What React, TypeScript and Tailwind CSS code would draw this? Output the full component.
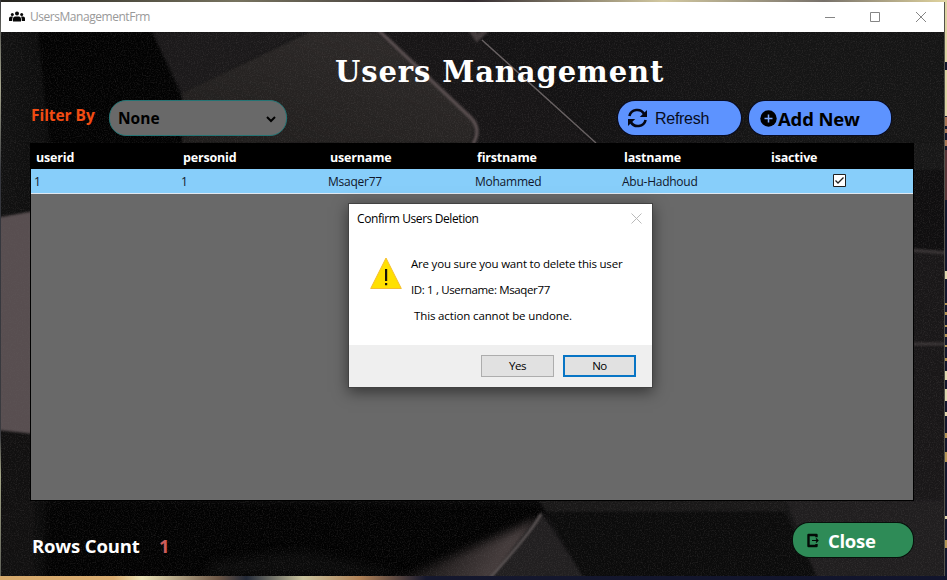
import React from "react";

const columns = ["userid", "personid", "username", "firstname", "lastname", "isactive"];
const user = ["1", "1", "Msaqer77", "Mohammed", "Abu-Hadhoud"];

function Desktop() {
  return (
    <svg className="absolute inset-0" width="947" height="580" viewBox="0 0 947 580">
      <defs>
        <linearGradient id="top">
          <stop offset="0" stopColor="#25241f" />
          <stop offset=".25" stopColor="#77735f" />
          <stop offset=".5" stopColor="#332c30" />
          <stop offset=".7" stopColor="#d2c8a0" />
          <stop offset=".87" stopColor="#77716a" />
          <stop offset="1" stopColor="#e1d49e" />
        </linearGradient>
        <linearGradient id="bottom">
          <stop offset="0" stopColor="#d7aa6d" />
          <stop offset=".12" stopColor="#dcae73" />
          <stop offset=".15" stopColor="#eee5ba" />
          <stop offset=".23" stopColor="#6e5847" />
          <stop offset=".26" stopColor="#232a38" />
          <stop offset=".32" stopColor="#cbc49f" />
          <stop offset=".38" stopColor="#b28358" />
          <stop offset=".45" stopColor="#15182e" />
          <stop offset="1" stopColor="#11142c" />
        </linearGradient>
        <linearGradient id="left" x2="0" y2="1">
          <stop offset="0" stopColor="#3b3c40" />
          <stop offset=".15" stopColor="#a7a78f" />
          <stop offset=".3" stopColor="#34363d" />
          <stop offset=".75" stopColor="#3a3a3e" />
          <stop offset=".82" stopColor="#a5a788" />
          <stop offset="1" stopColor="#5c5d56" />
        </linearGradient>
      </defs>
      <path fill="#11152b" d="M0 0h947v580H0z" />
      <path fill="url(#top)" d="M0 0h947v2H0z" />
      <path fill="url(#left)" d="M0 0h1v580H0z" />
      <path fill="url(#bottom)" d="M0 576h947v4H0z" />
      <path fill="#ded3a3" d="M944 0h3v62h-3zM944 70h3v46h-3z" />
      <path fill="#a87656" d="M944 117h3v9h-3zM944 129h3v4h-3zM944 140h3v6h-3z" />
      <path fill="#563437" d="M944 150h3v50h-3z" />
      <path fill="#e0d7af" d="M944 271h3v8h-3zM944 371h3v9h-3zM944 389h3v12h-3zM944 412h3v4h-3zM944 516h3v3h-3z" />
      <path fill="#b39556" d="M944 303h3v2h-3zM944 312h3v3h-3zM944 325h3v2h-3zM944 334h3v3h-3zM944 345h3v2h-3zM944 358h3v3h-3zM944 433h3v5h-3zM944 452h3v10h-3zM944 540h3v8h-3z" />
      <path fill="#55534b" d="M944 2h1v574h-1z" />
    </svg>
  );
}

function Wallpaper() {
  return (
    <svg className="absolute inset-0" width="943" height="544" viewBox="1 32 943 544">
      <defs>
        <linearGradient id="base">
          <stop offset="0" stopColor="#121212" />
          <stop offset=".09" stopColor="#070707" />
          <stop offset=".3" stopColor="#151415" />
          <stop offset=".6" stopColor="#131213" />
          <stop offset="1" stopColor="#171717" />
        </linearGradient>
        <linearGradient id="slab" x1="0" y1="1" x2="1" y2="0">
          <stop offset="0" stopColor="#1f1d1c" />
          <stop offset="1" stopColor="#302c2b" />
        </linearGradient>
        <linearGradient id="glow" x1="0" y1="0" x2="1" y2=".3">
          <stop offset=".2" stopColor="#060606" />
          <stop offset="1" stopColor="#554a4a" />
        </linearGradient>
        <filter id="soft" colorInterpolationFilters="sRGB"><feGaussianBlur stdDeviation="1.2" /></filter>
        <filter id="wide" x="-20%" y="-50%" width="140%" height="200%" colorInterpolationFilters="sRGB"><feGaussianBlur stdDeviation="5" /></filter>
        <filter id="grain" x="0" y="0" width="100%" height="100%" colorInterpolationFilters="sRGB">
          <feTurbulence type="fractalNoise" baseFrequency=".85" numOctaves="2" seed="4" />
          <feColorMatrix values="0 0 0 0 .4  0 0 0 0 .38  0 0 0 0 .38  1.5 0 0 0 -.67" />
        </filter>
      </defs>
      <path fill="url(#base)" d="M1 32h943v544H1z" />
      <g filter="url(#soft)">
        <path fill="#020202" d="M38 32H152L182 100V143H50z" />
        <path fill="#1b191a" d="M152 32H305L182 93z" />
        <path fill="url(#slab)" d="M182 93L310 32H376L476 122L471 143H182z" />
        <path fill="#171516" d="M376 32H472L593 143H471L478 124z" />
        <path fill="none" stroke="#5a4f50" strokeWidth="3.5" d="M377 29L470 117Q482 128 473 144" />
        <path fill="none" stroke="#413a3b" strokeWidth="6" d="M471 29L477 38L486 30" />
        <path fill="#151515" d="M768 32H944V143H740z" />
      </g>
      <path fill="none" stroke="#696263" strokeWidth="1.4" d="M482 40L596 143" />
      <g filter="url(#soft)">
        <path fill="#584e50" d="M-4 218L34 211V434L-4 430z" />
        <path fill="#111010" d="M-4 431L34 435V580H-4z" />
        <path fill="#191718" d="M910 195H948V580H910z" />
        <path fill="#0f0e0f" d="M910 170H948V252L910 249z" />
        <path fill="none" stroke="#3b3637" strokeWidth="3" d="M910 250L948 253M910 344H948" />
      </g>
      <path fill="#020202" filter="url(#wide)" d="M45 500H545V582H45z" />
      <path fill="#0b0b0b" filter="url(#wide)" d="M211 562L300 550L410 576H205z" />
      <path fill="url(#glow)" filter="url(#wide)" d="M540 518L390 584H493z" />
      <g filter="url(#soft)">
        <path fill="#211f20" d="M541 512L491 578H584z" />
        <path fill="#0b0b0b" d="M546 512H785L817 578H584z" />
        <path fill="#191818" d="M538 500H786V510L547 512z" />
        <path fill="#201e1f" d="M786 500H944V578H817z" />
      </g>
      <path fill="none" stroke="#6b6363" strokeWidth="1.8" filter="url(#soft)" d="M541 514Q533 530 490 578" />
      <path filter="url(#grain)" opacity=".42" d="M1 32h943v544H1z" />
    </svg>
  );
}

function TitleBar() {
  return (
    <header className="flex h-[30px] shrink-0 items-center bg-white pl-2">
      <svg width="16" height="12" viewBox="0 0 16 12" fill="#080808">
        <circle cx="8" cy="2.6" r="2" />
        <circle cx="3.3" cy="3.4" r="1.5" />
        <circle cx="12.7" cy="3.4" r="1.5" />
        <path d="M4 10.5V8Q4 5.4 6.3 5.4H9.7Q12 5.4 12 8V10.5zM0 10V7.3Q0 5.5 2 5.5H4Q3.2 6.5 3.2 10zM16 10V7.3Q16 5.5 14 5.5H12Q12.8 6.5 12.8 10z" />
      </svg>
      <span className="ml-[5px] text-[12px] tracking-[-0.46px] text-[#999]">UsersManagementFrm</span>
      <svg className="ml-auto mr-4" width="104" height="12" viewBox="0 0 104 12" fill="none" stroke="#858585">
        <path d="M1 6.5H11M46.5 1.5H55.5V10.5H46.5zM92 1L102 11M102 1L92 11" />
      </svg>
    </header>
  );
}

function Toolbar() {
  return (
    <div className="flex h-[43px] items-start pl-[30px]">
      <span className="mt-1 w-[78px] whitespace-nowrap text-[15.5px] font-bold leading-[22px] tracking-[-0.05px] text-[#f24c13]">Filter By</span>
      <div className="flex h-9 w-[178px] items-center justify-between rounded-[17px] border border-[#247474] bg-[#696969] pl-2 pr-[10px] text-[15.5px] font-bold text-black">
        <span className="mt-px">None</span>
        <svg className="mt-0.5" width="10" height="7" viewBox="0 0 10 7" fill="none" stroke="#000" strokeWidth="2"><path d="M1 1L5 5L9 1" /></svg>
      </div>
      <button className="ml-[331px] mt-px flex h-[34px] w-[123px] items-center rounded-full bg-[#5d93ff] pl-[9px] text-[16px] text-[#070b1c] ring-1 ring-[#080b23]">
        <svg width="21" height="20" viewBox="0 0 21 20" fill="none" stroke="#050714" strokeWidth="2.6">
          <path d="M2.4 8A8 7.8 0 0 1 17.2 6M18.6 12A8 7.8 0 0 1 3.8 14" />
          <path fill="#050714" stroke="none" d="M20 2V9H12.8zM1 18V11H8.2z" />
        </svg>
        <span className="ml-[7px] mt-px font-['Liberation_Sans',sans-serif] tracking-[-0.28px]">Refresh</span>
      </button>
      <button className="ml-2 mt-px flex h-[34px] w-[142px] items-center rounded-[16px] bg-[#5d93ff] pl-[11px] text-[18.5px] font-bold text-black ring-1 ring-[#080b23]">
        <svg width="17" height="17" viewBox="0 0 17 17"><circle cx="8.5" cy="8.5" r="8.2" /><path stroke="#7ba8ff" strokeWidth="1.5" d="M4.5 8.5h8M8.5 4.5v8" /></svg>
        <span className="ml-px mt-0.5 whitespace-nowrap tracking-[-0.15px]">Add New</span>
      </button>
    </div>
  );
}

function UsersTable() {
  return (
    <div className="ml-[29px] h-[358px] w-[884px] border border-black bg-[#696969]">
      <div className="flex h-[25px] items-center bg-black text-[12.5px] font-bold text-white">
        {columns.map((name) => <span key={name} className="w-[147px] pl-[5px] pt-1 tracking-[-0.18px]">{name}</span>)}
      </div>
      <div className="flex h-[25px] items-center border-b border-[#e1e8f0] bg-[#87cefa] text-[12px] text-[#10172b]">
        {user.map((value, i) => <span key={columns[i]} className="w-[147px] pl-[3px] pt-0.5 tracking-[-0.25px]">{value}</span>)}
        <svg className="ml-[67px] mb-0.5" width="13" height="13" viewBox="0 0 13 13" fill="none" stroke="#202020"><path fill="#fff" d="M.5.5h12v12H.5z" /><path strokeWidth="1.3" d="M2.5 6.5L5 9L10.5 3.5" /></svg>
      </div>
    </div>
  );
}

function Footer() {
  return (
    <footer className="flex items-start pl-[31px] pt-[22px] font-bold">
      <span className="mt-[9px] w-[127px] whitespace-nowrap text-[18.5px] leading-[27px] tracking-[-0.15px] text-white">Rows Count</span>
      <span className="mt-[9px] text-[18.5px] leading-[27px] text-[#cd5c5c]">1</span>
      <button className="ml-auto mr-[31px] flex h-[34px] w-[120px] items-center rounded-[16px] bg-[#2e8b57] pl-[14px] text-[18.5px] text-white ring-1 ring-[#06110b]">
        <svg width="12" height="15" viewBox="0 0 12 15" fill="none" stroke="#030a06">
          <path strokeWidth="2.4" strokeLinejoin="round" d="M9.5 4.2V2H1.5V13H9.5V11" /><path strokeWidth="1.1" d="M5 7.5H11M9 5.5L11 7.5L9 9.5" />
        </svg>
        <span className="ml-[9px] mt-0.5 tracking-[-0.3px]">Close</span>
      </button>
    </footer>
  );
}

function ConfirmDialog() {
  return (
    <div role="dialog" className="absolute left-[348px] top-[203px] flex h-[185px] w-[305px] flex-col border border-[#424242] bg-white text-[11.5px] text-black shadow-[0_4px_14px_rgba(0,0,0,0.5)]">
      <div className="flex h-[29px] items-center justify-between pl-2 pr-[10px]">
        <span className="text-[12px] tracking-[-0.4px]">Confirm Users Deletion</span>
        <svg width="11" height="11" viewBox="0 0 11 11" stroke="#bababa"><path d="M.5.5L10.5 10.5M10.5.5L.5 10.5" /></svg>
      </div>
      <div className="flex h-[112px] pl-[21px] pt-[18px]">
        <svg className="mt-[6px] shrink-0" width="32" height="33" viewBox="0 0 32 33">
          <path fill="#ffe000" stroke="#f5be2e" strokeLinejoin="round" d="M16 1L31.3 31.5H.7z" />
          <path fill="#17140a" d="M15 12h2.2v12H15zM15 26h2.2v2.2H15z" />
        </svg>
        <div className="ml-[9px] whitespace-pre leading-[26px]">
          <p className="tracking-[-0.2px]">Are you sure you want to delete this user</p>
          <p className="tracking-[-0.36px]">ID: 1 , Username: Msaqer77</p>
          <p className="pl-[3px] tracking-[-0.13px]">This action cannot be undone.</p>
        </div>
      </div>
      <div className="flex flex-1 items-start justify-end gap-[9px] bg-[#efefef] pr-4 pt-[10px] tracking-[-0.5px]">
        <button className="h-[22px] w-[73px] border border-[#adadad] bg-[#e1e1e1]">Yes</button>
        <button className="h-[22px] w-[73px] border-2 border-[#0875c5] bg-[#e1e1e1]">No</button>
      </div>
    </div>
  );
}

export default function App() {
  return (
    <div className="relative h-[580px] w-[947px] overflow-hidden pl-px pt-0.5 font-['Open_Sans','Noto_Sans',sans-serif]">
      <Desktop />
      <main className="relative flex h-[574px] w-[943px] flex-col">
        <TitleBar />
        <section className="relative flex-1">
          <Wallpaper />
          <div className="relative">
            <h1 className="h-[68px] pl-[334px] pt-[19px] font-['DejaVu_Serif',serif] text-[29px] font-bold leading-[42px] tracking-[0.9px] text-white">Users Management</h1>
            <Toolbar />
            <UsersTable />
            <Footer />
          </div>
        </section>
      </main>
      <ConfirmDialog />
    </div>
  );
}
